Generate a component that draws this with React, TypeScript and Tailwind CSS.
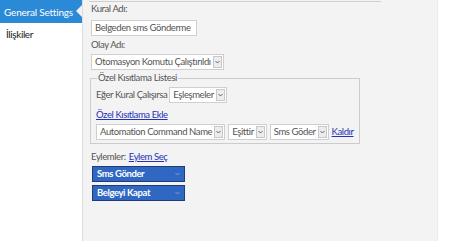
import React from "react";

function Arrow({ dark }: { dark?: boolean }) {
  return (
    <span
      className={
        dark
          ? "flex h-full w-[10px] shrink-0 items-center justify-center"
          : "my-[1px] mr-[1px] flex h-[12px] w-[9px] shrink-0 items-center justify-center border border-[#c8c8c8] bg-[#ececec]"
      }
    >
      <svg width="5" height="4" viewBox="0 0 5 4">
        <path d="M0.5 1 L2.5 3 L4.5 1" fill="none" stroke={dark ? "#7f9fd6" : "#666"} strokeWidth="1" />
      </svg>
    </span>
  );
}

function Select({ label }: { label: string }) {
  return (
    <div className="flex h-[16px] shrink-0 items-center gap-[2px] border border-[#cfcfcf] bg-white pl-[3px]">
      <span className="whitespace-nowrap">{label}</span>
      <Arrow />
    </div>
  );
}

function ActionButton({ label }: { label: string }) {
  return (
    <div className="flex h-[16px] w-[93px] items-center justify-between border border-[#1d3c78] bg-[#2f67c2] pl-[4px] pr-[2px] font-bold text-white">
      <span>{label}</span>
      <Arrow dark />
    </div>
  );
}

export default function App() {
  return (
    <div className="flex h-[241px] w-[450px] whitespace-nowrap bg-white text-[9.5px] leading-[12px] tracking-[-0.4px] text-[#555] [font-family:Lato,sans-serif]">
      {/* left menu */}
      <div className="w-[82px] shrink-0">
        <div className="relative flex h-[23px] items-center bg-[#2b8ad8] pl-[4px] text-[10px] tracking-[-0.2px] text-white">
          General Settings
          <span className="absolute right-0 top-[5px] h-0 w-0 border-y-[6px] border-r-[6px] border-y-transparent border-r-[#f3f3f3]" />
        </div>
        <div className="pl-[6px] pt-[5px] text-[10px] text-[#222]">İlişkiler</div>
      </div>

      {/* form panel */}
      <div className="w-[355px] shrink-0 border-l border-[#dedede] bg-[#f3f3f3] pl-[8px]">
        <div className="ml-[-2px] h-[2px] w-[292px] border-b border-[#cfcfcf]" />
        <div className="mt-[1px]">Kural Adı:</div>
        <div className="mt-[5px] flex h-[16px] w-[106px] items-center border border-[#cfcfcf] bg-white pl-[3px]">
          Belgeden sms Gönderme
        </div>
        <div className="mt-[3px]">Olay Adı:</div>
        <div className="mt-[3px] flex">
          <Select label="Otomasyon Komutu Çalıştırıldı" />
        </div>

        <fieldset className="mt-[2px] ml-[-1px] w-[253px] border border-[#cccccc] px-[5px] pb-[3px]">
          <legend className="ml-[1px] px-[1px]">Özel Kısıtlama Listesi</legend>
          <div className="mt-[3px] flex items-center gap-[2px]">
            <span>Eğer Kural Çalışırsa</span>
            <Select label="Eşleşmeler" />
          </div>
          <div className="mt-[6px] text-[#2330b8] underline">Özel Kısıtlama Ekle</div>
          <div className="mt-[3px] flex items-center gap-[3px]">
            <Select label="Automation Command Name" />
            <Select label="Eşittir" />
            <Select label="Sms Göder" />
            <span className="text-[#2330b8] underline">Kaldır</span>
          </div>
        </fieldset>

        <div className="mt-[7px] flex gap-[3px]">
          <span>Eylemler:</span>
          <span className="text-[#2330b8] underline">Eylem Seç</span>
        </div>
        <div className="mt-[3px] flex flex-col gap-[3px] pl-[1px]">
          <ActionButton label="Sms Gönder" />
          <ActionButton label="Belgeyi Kapat" />
        </div>
      </div>

      <div className="flex-1 border-l border-[#ececec] bg-white" />
    </div>
  );
}
